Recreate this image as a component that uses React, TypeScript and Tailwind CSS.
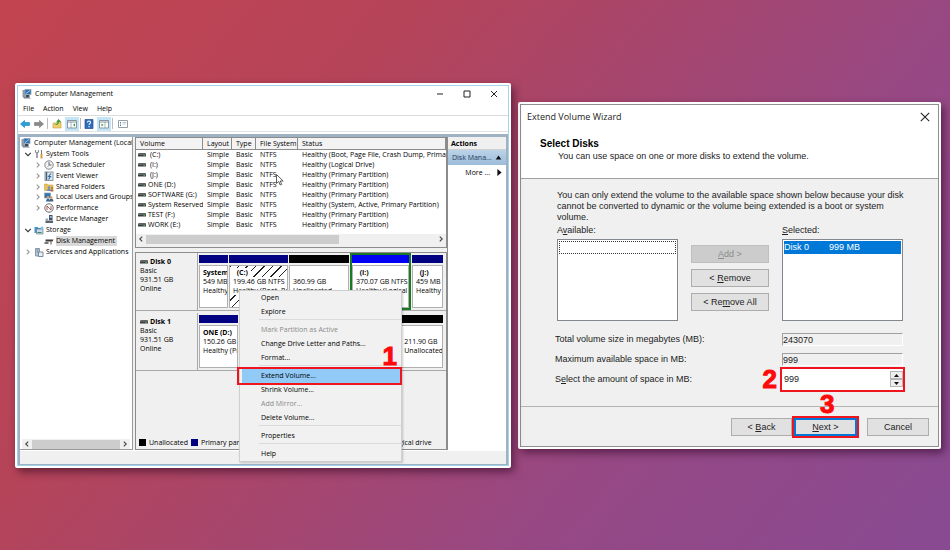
import type { ReactNode } from 'react';

const VOLUMES = [
  { name: '(C:)', indent: true, status: 'Healthy (Boot, Page File, Crash Dump, Primary Partition)' },
  { name: '(I:)', indent: true, status: 'Healthy (Logical Drive)' },
  { name: '(J:)', indent: true, status: 'Healthy (Primary Partition)' },
  { name: 'ONE (D:)', status: 'Healthy (Primary Partition)' },
  { name: 'SOFTWARE (G:)', status: 'Healthy (Primary Partition)' },
  { name: 'System Reserved', status: 'Healthy (System, Active, Primary Partition)' },
  { name: 'TEST (F:)', status: 'Healthy (Primary Partition)' },
  { name: 'WORK (E:)', status: 'Healthy (Primary Partition)' },
];

const MENU = [
  [{ label: 'Open' }, { label: 'Explore' }],
  [
    { label: 'Mark Partition as Active', disabled: true },
    { label: 'Change Drive Letter and Paths...' },
    { label: 'Format...' },
  ],
  [
    { label: 'Extend Volume...', active: true },
    { label: 'Shrink Volume...' },
    { label: 'Add Mirror...', disabled: true },
    { label: 'Delete Volume...' },
  ],
  [{ label: 'Properties' }],
  [{ label: 'Help' }],
] as { label: string; disabled?: boolean; active?: boolean }[][];

const Svg = ({ children, className = 'size-[10px]' }: { children: ReactNode; className?: string }) => (
  <svg viewBox="0 0 10 10" fill="none" className={`shrink-0 ${className}`} aria-hidden="true">
    {children}
  </svg>
);

const ComputerIcon = () => (
  <Svg>
    <rect x="0.5" y="1" width="2.5" height="7" fill="#8e9aa5" />
    <rect x="3" y="0.5" width="6" height="5" fill="#2f6fae" stroke="#8fa3b5" strokeWidth="0.7" />
    <path d="M4 4.5 8 1.5" stroke="#9ed0f5" />
    <path d="M1 8h6l2 1.5H2z" fill="#74818c" />
    <path d="M3.5 6h4v2h-4z" fill="#3c4b58" />
  </Svg>
);

const ToolsIcon = () => (
  <Svg>
    <path d="M3 4v5" stroke="#8b8f94" strokeWidth="1.6" />
    <path d="M1.5 1v2L3 4.2 4.5 3V1" stroke="#8b8f94" strokeWidth="1.1" />
    <path d="M7.5 1v4" stroke="#777" />
    <path d="M7.5 5v4.5" stroke="#d99a45" strokeWidth="2" />
  </Svg>
);

const ClockIcon = () => (
  <Svg>
    <circle cx="5" cy="5" r="4.2" fill="#f1f4f6" stroke="#83898e" />
    <path d="M5 2v3h2.5" stroke="#5c6b78" />
    <path d="M5 5 3.5 7" stroke="#d98d45" strokeWidth="0.8" />
  </Svg>
);

const EventIcon = () => (
  <Svg>
    <rect x="1" y="1" width="8" height="8.5" fill="#dfe6ec" stroke="#73808b" strokeWidth="0.8" />
    <path d="M2.5 1v8" stroke="#44617d" strokeWidth="1.4" />
    <path d="M7 2.5 4.5 5.5h2L4.5 8.5" stroke="#2f6caa" strokeWidth="1.1" />
  </Svg>
);

const FolderIcon = () => (
  <Svg>
    <path d="M0.5 2h3l1 1h4.5v5.5h-8.5z" fill="#e9bf5a" stroke="#c9973a" strokeWidth="0.5" />
    <circle cx="5" cy="5.5" r="1.2" fill="#5f8fc0" />
    <path d="M3 9c0-3 4-3 4 0z" fill="#5f8fc0" />
    <circle cx="8" cy="6" r="1" fill="#b7683c" />
    <path d="M6.5 9.5c0-3 3-3 3 0z" fill="#b7683c" />
  </Svg>
);

const UsersIcon = () => (
  <Svg>
    <rect x="0.5" y="1" width="6" height="5" fill="#2f73ae" stroke="#8fa3b5" strokeWidth="0.7" />
    <circle cx="4" cy="5" r="1.3" fill="#cf9a72" />
    <path d="M2 9.5c0-4 4-4 4 0z" fill="#356aa0" />
    <circle cx="7.2" cy="5.4" r="1.2" fill="#cf9a72" />
    <path d="M5.4 9.5c0-4 4-4 4 0z" fill="#4d5f70" />
  </Svg>
);

const PerformanceIcon = () => (
  <Svg>
    <circle cx="5" cy="5" r="4.2" fill="#fbfbfb" stroke="#6e6e6e" />
    <path d="M3 7V3l4 4V3" stroke="#a33a32" strokeWidth="0.8" />
  </Svg>
);

const DeviceIcon = () => (
  <Svg>
    <rect x="5" y="1" width="3.5" height="5" fill="#3f5264" />
    <path d="M5.8 2h2v2h-2z" fill="#86b8e0" />
    <path d="M1.5 6.5h7.5v2.5H1.5z" fill="#59656f" />
    <path d="M1.5 4.5h2.5v2H1.5z" fill="#9aa4ac" />
  </Svg>
);

const StorageIcon = () => (
  <Svg>
    <path d="M0.5 2h3.2l0.8 1H8v5H0.5z" fill="#4c94c8" />
    <path d="M2.5 4H9v5H2.5z" fill="#c9dbe8" stroke="#54718a" strokeWidth="0.6" />
    <path d="M3.5 7.5h4" stroke="#3c8c5a" />
    <circle cx="8" cy="3" r="1.5" fill="#7fc2de" />
  </Svg>
);

const DiskIcon = () => (
  <Svg>
    <path d="M1.5 3.5h8l-1 2h-7z" fill="#3b3b3b" />
    <path d="M0.5 6h4v2h-4z" fill="#777" />
    <path d="M7 5.5v3" stroke="#555" />
  </Svg>
);

const ServicesIcon = () => (
  <Svg>
    <path d="M1.5 1.5h4v7.5h-4z" fill="#b9cad8" stroke="#64798a" strokeWidth="0.7" />
    <path d="M4.5 5h4.5v4.5H4.5z" fill="#e8eff5" stroke="#5c7488" strokeWidth="0.8" />
    <path d="M2.5 3h2M2.5 5h1.5" stroke="#46657f" strokeWidth="0.7" />
  </Svg>
);

const DriveGlyph = () => (
  <svg viewBox="0 0 8 4" className="h-1 w-2 shrink-0" aria-hidden="true">
    <path d="M1 0h6.5l0.5 1v2.5H0V1z" fill="#3a3f3d" />
    <path d="M0 1h8" stroke="#9a9d9b" strokeWidth="0.8" />
    <path d="M5.5 2.5h1.5" stroke="#46b86a" strokeWidth="0.9" />
  </svg>
);

const Chevron = ({ dir }: { dir: 'left' | 'right' | 'down' }) => (
  <Svg className="size-[8px]">
    <path
      d={dir === 'left' ? 'M6.5 2 3.5 5l3 3' : dir === 'right' ? 'M3.5 2l3 3-3 3' : 'M1.5 3.5 5 7l3.5-3.5'}
      stroke="currentColor"
      strokeWidth="1.4"
    />
  </Svg>
);

const TREE: { label: string; icon: ReactNode; level: number; open?: boolean; leaf?: boolean; selected?: boolean }[] = [
  { label: 'System Tools', icon: <ToolsIcon />, level: 1, open: true },
  { label: 'Task Scheduler', icon: <ClockIcon />, level: 2 },
  { label: 'Event Viewer', icon: <EventIcon />, level: 2 },
  { label: 'Shared Folders', icon: <FolderIcon />, level: 2 },
  { label: 'Local Users and Groups', icon: <UsersIcon />, level: 2 },
  { label: 'Performance', icon: <PerformanceIcon />, level: 2 },
  { label: 'Device Manager', icon: <DeviceIcon />, level: 2, leaf: true },
  { label: 'Storage', icon: <StorageIcon />, level: 1, open: true },
  { label: 'Disk Management', icon: <DiskIcon />, level: 2, leaf: true, selected: true },
  { label: 'Services and Applications', icon: <ServicesIcon />, level: 1 },
];

const ScrollBar = ({ thumb }: { thumb: string }) => (
  <div className="flex h-[10px] items-center bg-[#f0f0f0]">
    <button aria-label="Scroll left" className="px-px text-[#444]">
      <Chevron dir="left" />
    </button>
    <div className="h-[9px] flex-1">
      <div className={`h-full bg-[#cdcdcd] ${thumb}`} />
    </div>
    <button aria-label="Scroll right" className="px-px text-[#444]">
      <Chevron dir="right" />
    </button>
  </div>
);

const Tree = () => (
  <nav className="flex w-[113px] shrink-0 flex-col border-r border-b border-[#9a9a9a] bg-white">
    <ul className="grid h-[120px] auto-rows-fr overflow-hidden pt-px whitespace-nowrap">
      <li className="flex items-center gap-[3px] pl-px">
        <ComputerIcon />
        Computer Management (Local)
      </li>
      {TREE.map(({ label, icon, level, open, leaf, selected }) => (
        <li className={`flex items-center gap-[2px] ${level === 1 ? 'pl-1' : 'pl-[14px]'}`} key={label}>
          <span className={`w-2 ${open ? 'text-[#333]' : 'text-[#999]'}`}>
            {!leaf && <Chevron dir={open ? 'down' : 'right'} />}
          </span>
          {icon}
          <span className={selected ? 'bg-[#d9d9d9] pr-[2px]' : ''}>{label}</span>
        </li>
      ))}
    </ul>
    <div className="mt-auto px-[2px]">
      <ScrollBar thumb="w-full" />
    </div>
  </nav>
);

const HEAD_CELL = 'border-r border-b border-[#8c8c8c] px-[4px] text-left font-normal';

const VolumeList = () => (
  <section className="overflow-hidden border border-[#8c8c8c] bg-white">
    <table className="w-full table-fixed border-separate border-spacing-0 whitespace-nowrap">
      <thead>
        <tr className="h-[12px] bg-[#f3f3f3]">
          <th className={`w-[67px] ${HEAD_CELL}`}>Volume</th>
          <th className={`w-[29px] ${HEAD_CELL}`}>Layout</th>
          <th className={`w-[24px] ${HEAD_CELL}`}>Type</th>
          <th className={`w-[42px] ${HEAD_CELL}`}>File System</th>
          <th className={HEAD_CELL}>Status</th>
        </tr>
      </thead>
      <tbody>
        {VOLUMES.map(({ name, indent, status }) => (
          <tr className="h-[10px]" key={name}>
            <td className="overflow-hidden p-0 pl-[2px]">
              <span className="flex items-center gap-[2px]">
                <DriveGlyph />
                <span className={indent ? 'pl-[2px]' : ''}>{name}</span>
              </span>
            </td>
            <td className="p-0 pl-[4px]">Simple</td>
            <td className="p-0 pl-[4px]">Basic</td>
            <td className="p-0 pl-[4px]">NTFS</td>
            <td className="overflow-hidden p-0 pl-[4px]">{status}</td>
          </tr>
        ))}
      </tbody>
    </table>
    <div className="bg-[#f0f0f0] pb-[3px]">
      <div className="bg-white pt-[4px]">
        <ScrollBar thumb="w-2/3" />
      </div>
    </div>
  </section>
);

type PartitionProps = { bar: string; name?: string; lines?: string[]; framed?: boolean; hatched?: boolean };

const Partition = ({ bar, name, lines = [], framed, hatched }: PartitionProps) => (
  <div className={`flex min-w-0 flex-col gap-[2px] ${framed ? 'border-2 border-[#1b7a24] bg-white' : 'pt-[2px] pb-[2px]'}`}>
    <div className={`h-2 ${bar}`} />
    <div
      className={`flex-1 overflow-hidden border border-[#b0b0b0] pt-[2px] leading-[9px] whitespace-nowrap ${
        hatched ? 'bg-[repeating-linear-gradient(135deg,#222_0_1px,#fff_1px_6px)]' : 'bg-white'
      }`}
    >
      <b className="inline-block min-h-[9px] bg-white px-[3px] align-top">{name}</b>
      {lines.map((line) => (
        <p className="bg-white pl-[3px]" key={line}>
          {line}
        </p>
      ))}
    </div>
  </div>
);

const DiskRow = ({ name, columns, children }: { name: string; columns: string; children: ReactNode }) => (
  <div className="flex h-[58px] border-b border-[#a8a8a8]">
    <div className="w-[62px] shrink-0 border-r border-[#a8a8a8] px-[4px] pt-[4px] leading-[9px]">
      <b className="flex items-center gap-[2px]">
        <DriveGlyph />
        {name}
      </b>
      <p>Basic</p>
      <p>931.51 GB</p>
      <p>Online</p>
    </div>
    <div className={`grid min-w-0 flex-1 gap-px pr-[3px] pl-px ${columns}`}>{children}</div>
  </div>
);

const Legend = ({ color, label }: { color: string; label: string }) => (
  <li className="flex items-center gap-[3px]">
    <span className={`size-[7px] ${color}`} />
    {label}
  </li>
);

const DiskView = () => (
  <section className="flex flex-1 flex-col gap-[2px] overflow-hidden border border-[#8c8c8c] bg-[#f0f0f0]">
    <DiskRow name="Disk 0" columns="grid-cols-[29fr_59fr_60fr_61fr_31fr]">
      <Partition bar="bg-[#000080]" name="System" lines={['549 MB', 'Healthy']} />
      <Partition bar="bg-[#000080]" name="&nbsp; (C:)" lines={['199.46 GB NTFS', 'Healthy (Boot, Page']} hatched />
      <Partition bar="bg-black" lines={['360.99 GB', 'Unallocated']} />
      <Partition bar="bg-[#0000f5]" name="&nbsp; (I:)" lines={['370.07 GB NTFS', 'Healthy (Logical Drive)']} framed />
      <Partition bar="bg-[#000080]" name="&nbsp; (J:)" lines={['459 MB', 'Healthy']} />
    </DiskRow>
    <DiskRow name="Disk 1" columns="grid-cols-[39fr_80fr_80fr_43fr]">
      <Partition bar="bg-[#000080]" name="ONE  (D:)" lines={['150.26 GB', 'Healthy (Primary']} />
      <Partition bar="bg-[#000080]" />
      <Partition bar="bg-[#000080]" />
      <Partition bar="bg-black" lines={['211.90 GB', 'Unallocated']} />
    </DiskRow>
    <ul className="mt-auto flex h-[13px] items-center gap-[3px] overflow-hidden pl-[3px] whitespace-nowrap">
      <Legend color="bg-black" label="Unallocated" />
      <Legend color="bg-[#000080]" label="Primary partition" />
      <Legend color="bg-[#007a00]" label="Extended partition" />
      <Legend color="bg-[#0000f5]" label="Free space" />
      <Legend color="bg-[#3c78ff]" label="Logical drive" />
    </ul>
  </section>
);

const Step = ({ children, className }: { children: ReactNode; className: string }) => (
  <strong
    className={`font-['Liberation_Sans',sans-serif] text-[26px] leading-[26px] font-bold text-[#ff0a0a] [-webkit-text-stroke:1px_#ff0a0a] ${className}`}
  >
    {children}
  </strong>
);

const ContextMenu = () => (
  <div
    role="menu"
    className="absolute top-[205px] left-[222px] w-[163px] border border-[#cfcfcf] bg-[#f1f1f1] shadow-[1px_1px_2px_rgba(0,0,0,0.2)]"
  >
    {MENU.map((group, index) => (
      <div className={index ? 'ml-[19px] border-t border-[#dadada] pt-[3px]' : 'ml-[19px]'} key={`group-${index}`}>
        {group.map(({ label, disabled, active }) => (
          <button
            role="menuitem"
            disabled={disabled}
            className={`relative -ml-[17px] block h-[14px] w-[158px] pl-[19px] text-left ${
              active ? 'bg-[#91c9f7]' : disabled ? 'text-[#8a8a8a]' : ''
            }`}
            key={label}
          >
            {label}
            {active && <span className="absolute -inset-y-[2px] -right-[2px] -left-[5px] border-2 border-[#f0141e]" />}
          </button>
        ))}
      </div>
    ))}
    <Step className="absolute top-[52px] right-[4px]">1</Step>
  </div>
);

const Toolbar = () => (
  <div className="flex h-[16px] items-center gap-[3px] border-b border-[#e3e3e3] pl-[2px]">
    <button aria-label="Back">
      <Svg>
        <path d="M0.5 5 4.5 1.5v2h5v3h-5v2z" fill="#27a3dc" stroke="#1978b3" strokeWidth="0.6" />
      </Svg>
    </button>
    <button aria-label="Forward" className="ml-px">
      <Svg>
        <path d="M9.5 5 5.5 1.5v2h-5v3h5v2z" fill="#8a8a8a" stroke="#777" strokeWidth="0.6" />
      </Svg>
    </button>
    <span className="h-[11px] w-px bg-[#bbb]" />
    <button aria-label="Up one level" className="ml-px">
      <Svg>
        <path d="M1 4h3l1-1h4v6H1z" fill="#f0cf6a" stroke="#b89a45" strokeWidth="0.6" />
        <path d="M3.5 5.5C6 5.5 6.5 4 6.5 2M5 3l1.5-2L8.5 3" stroke="#35a03a" strokeWidth="1.2" />
      </Svg>
    </button>
    <button aria-label="Show console tree" className="-mr-[2px] bg-[#c4e5f6] p-[2px]">
      <Svg>
        <path d="M0.5 1.5h9v7.5h-9z" fill="#fff" stroke="#8795a0" />
        <path d="M1 3h8" stroke="#8795a0" />
        <path d="M4 3v6" stroke="#8795a0" strokeWidth="0.7" />
        <path d="M8 4.5v3L6 6z" fill="#31a03c" />
      </Svg>
    </button>
    <span className="h-[11px] w-px bg-[#bbb]" />
    <button aria-label="Help">
      <Svg>
        <path d="M1 0.5h8v9H1z" fill="#2e6fbd" stroke="#1d4f8e" strokeWidth="0.7" />
        <path d="M3.5 3.5C3.5 1.5 6.5 1.5 6.5 3.5 6.5 4.5 5 4.7 5 6M5 7v1.2" stroke="#fff" strokeWidth="1.1" />
      </Svg>
    </button>
    <button aria-label="Show action pane" className="-mr-[2px] bg-[#c4e5f6] p-[2px]">
      <Svg>
        <path d="M0.5 1.5h9v7.5h-9z" fill="#fff" stroke="#8795a0" />
        <path d="M1 3h8" stroke="#8795a0" />
        <path d="M6 3v6" stroke="#8795a0" strokeWidth="0.7" />
        <path d="M2.5 4.5v3L4.5 6z" fill="#31a03c" />
      </Svg>
    </button>
    <span className="h-[11px] w-px bg-[#bbb]" />
    <button aria-label="Settings" className="ml-[2px]">
      <Svg>
        <path d="M0.5 1.5h9v7h-9z" fill="#fff" stroke="#98a0a6" />
        <path d="M2 3.5h1M2 5h1M2 6.5h1" stroke="#4482b8" />
        <path d="M4.5 3.5h4M4.5 5h3" stroke="#a9afb4" strokeWidth="0.7" />
      </Svg>
    </button>
  </div>
);

const ComputerManagement = () => (
  <section className="relative mt-[83px] rounded-[2px] border-2 border-white bg-white font-['Open_Sans',sans-serif] text-[7px] leading-[10px] text-black shadow-[3px_4px_8px_rgba(40,0,30,0.55)]">
    <div className="border border-[#a3d3ea]">
      <header className="flex h-4 items-center gap-[3px] pl-1">
        <ComputerIcon />
        <h1>Computer Management</h1>
        <div className="mr-[9px] ml-auto flex gap-[17px]">
          <button aria-label="Minimize">
            <Svg>
              <path d="M2 5h6" stroke="#222" />
            </Svg>
          </button>
          <button aria-label="Maximize">
            <Svg>
              <path d="M2 2h6v6H2z" stroke="#222" />
            </Svg>
          </button>
          <button aria-label="Close">
            <Svg>
              <path d="m2 2 6 6M8 2 2 8" stroke="#222" />
            </Svg>
          </button>
        </div>
      </header>
      <nav className="flex h-[14px] items-center gap-[9px] border-b border-[#dcdcdc] pl-[5px]">
        <button>File</button>
        <button>Action</button>
        <button>View</button>
        <button>Help</button>
      </nav>
      <Toolbar />
      <div className="mt-[2px] bg-[#9fb2c3] px-[2px] pt-[3px] pb-px">
        <div className="flex min-h-[313px] bg-[#f0f0f0]">
          <Tree />
          <div className="ml-[2px] flex min-w-0 flex-1 flex-col gap-[4px]">
            <VolumeList />
            <DiskView />
          </div>
          <aside className="w-[59px] shrink-0 border-l border-[#8c8c8c] bg-white">
            <h2 className="h-[13px] border-b border-[#d0d0d0] bg-[#f0f0f0] pl-[3px] leading-[13px] font-bold">Actions</h2>
            <button className="flex h-[15px] w-full items-center justify-between bg-linear-to-b from-[#bcd3e8] to-[#9cbcda] pr-1 pl-[4px] text-[#1e395b]">
              Disk Mana...
              <Svg className="size-[7px]">
                <path d="M1 8 5 2l4 6z" fill="#111" />
              </Svg>
            </button>
            <button className="flex h-[15px] w-full items-center justify-end gap-[6px] pr-[3px]">
              More ...
              <Svg className="size-[7px]">
                <path d="M2 0v10l6-5z" fill="#111" />
              </Svg>
            </button>
          </aside>
        </div>
        <footer className="h-[14px] border-t border-white bg-[#f0f0f0]" />
      </div>
    </div>
    <svg viewBox="0 0 8 12" className="absolute top-[89px] left-[259px] h-3 w-2" aria-hidden="true">
      <path d="M0.5 0.5v9l2.2-2 1.5 3.5 1.5-.6-1.5-3.4h3z" fill="#fff" stroke="#333" strokeWidth="0.8" />
    </svg>
    <ContextMenu />
  </section>
);

const BUTTON = 'h-[18px] border border-[#adadad] bg-[#e1e1e1] text-center';
const FIELD = 'h-[13px] w-full border border-[#a0a0a0] border-r-white border-b-white';

const ExtendWizard = () => (
  <section className="mt-[102px] rounded-[2px] border-2 border-white bg-[#f0f0f0] font-['Liberation_Sans',sans-serif] text-[9px] leading-[11px] text-[#222] shadow-[3px_4px_8px_rgba(40,0,30,0.55)]">
    <div className="border border-[#8f8f8f]">
      <header className="h-[74px] border-b border-[#a0a0a0] bg-white pl-[6px]">
        <div className="flex h-[23px] items-center justify-between pr-[7px] font-['Open_Sans',sans-serif]">
          <h1>Extend Volume Wizard</h1>
          <button aria-label="Close">
            <Svg className="size-[12px]">
              <path d="m1.5 1.5 7 7M8.5 1.5l-7 7" stroke="#222" strokeWidth="0.9" />
            </Svg>
          </button>
        </div>
        <h2 className="mt-[9px] ml-[13px] text-[10px] leading-[14px] font-bold text-black">Select Disks</h2>
        <p className="ml-[31px]">You can use space on one or more disks to extend the volume.</p>
      </header>

      <form className="pb-[8px]" onSubmit={(event) => event.preventDefault()}>
        <div className="pt-[11px] pr-[35px] pl-[36px]">
          <p className="-mr-[3px]">
            You can only extend the volume to the available space shown below because your disk cannot be converted to
            dynamic or the volume being extended is a boot or system volume.
          </p>
          <div className="mt-[2px] flex justify-between">
            <div className="w-[121px]">
              <h3 id="available">
                A<u>v</u>ailable:
              </h3>
              <ul
                role="listbox"
                aria-labelledby="available"
                className="mt-[3px] h-[82px] border border-[#828790] bg-white p-px"
              >
                <li className="h-[13px] border border-dotted border-[#333]" />
              </ul>
            </div>
            <div className="flex w-[78px] flex-col gap-[6px] pt-[20px]">
              <button disabled className="h-[18px] border border-[#bfbfbf] bg-[#cccccc] text-center text-[#8a8a8a]">
                <u>A</u>dd &gt;
              </button>
              <button className={BUTTON}>
                &lt; <u>R</u>emove
              </button>
              <button className={BUTTON}>
                &lt; Re<u>m</u>ove All
              </button>
            </div>
            <div className="w-[121px]">
              <h3 id="selected">
                <u>S</u>elected:
              </h3>
              <ul
                role="listbox"
                aria-labelledby="selected"
                className="mt-[3px] h-[82px] border border-[#828790] bg-white p-px"
              >
                <li role="option" aria-selected="true" className="flex h-[13px] items-center gap-5 bg-[#0078d7] text-white">
                  <span>Disk 0</span>
                  <span>999 MB</span>
                </li>
              </ul>
            </div>
          </div>

          <div className="mt-[12px] -ml-[2px] grid grid-cols-[1fr_121px] items-center gap-y-[7px]">
            <label htmlFor="total">Total volume size in megabytes (MB):</label>
            <input id="total" readOnly value="243070" className={FIELD} />
            <label htmlFor="maximum">Maximum available space in MB:</label>
            <input id="maximum" readOnly value="999" className={FIELD} />
          </div>
          <div className="-mr-[2px] -ml-[2px] flex items-center">
            <label htmlFor="amount">
              S<u>e</u>lect the amount of space in MB:
            </label>
            <Step className="mr-[3px] ml-auto">2</Step>
            <div className="flex h-[25px] w-[125px] border-2 border-[#f0141e] bg-white">
              <input id="amount" defaultValue="999" className="min-w-0 flex-1 pl-[2px] outline-none" />
              <div className="flex w-[13px] flex-col justify-center">
                <button aria-label="Increase" className="flex h-[8px] items-center justify-center border border-[#b5b5b5] bg-[#eee]">
                  <Svg className="size-[5px]">
                    <path d="M0 8 5 2l5 6z" fill="#111" />
                  </Svg>
                </button>
                <button aria-label="Decrease" className="flex h-[8px] items-center justify-center border border-[#b5b5b5] bg-[#eee]">
                  <Svg className="size-[5px]">
                    <path d="M0 2l5 6 5-6z" fill="#111" />
                  </Svg>
                </button>
              </div>
            </div>
          </div>
        </div>

        <div className="relative mt-[14px] flex items-center justify-end border-t border-[#b4b4b4] pt-[9px] pr-[9px]">
          <button className={`w-[61px] ${BUTTON}`}>
            &lt; <u>B</u>ack
          </button>
          <div className="relative mr-[8px] border-2 border-[#f0141e]">
            <Step className="absolute -top-[27px] left-[26px]">3</Step>
            <button className="h-[18px] w-[63px] border-2 border-[#0078d7] bg-[#e1e1e1] text-center">
              <u>N</u>ext &gt;
            </button>
          </div>
          <button className={`w-[62px] ${BUTTON}`}>Cancel</button>
        </div>
      </form>
    </div>
  </section>
);

const App = () => (
  <main className="grid min-h-screen grid-cols-[496fr_423fr] items-start gap-[7px] bg-[linear-gradient(130deg,#c24450_0%,#b54459_30%,#964884_70%,#884a92_100%)] pr-[9px] pb-[80px] pl-[15px]">
    <ComputerManagement />
    <ExtendWizard />
  </main>
);

export default App;
